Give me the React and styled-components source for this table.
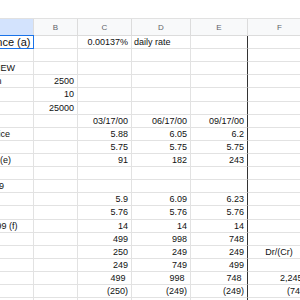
import React from 'react';
import styled, { createGlobalStyle } from 'styled-components';

const Global = createGlobalStyle`
  html, body { margin: 0; padding: 0; background: #fff; }
  body { font-family: 'Liberation Sans', Arial, sans-serif; }
`;

const COLS = '88px 44px 54px 59px 57px 64px';

const Viewport = styled.div`
  width: 300px;
  height: 300px;
  overflow: hidden;
  background: #fff;
`;

const TopBand = styled.div`
  height: 19px;
  box-sizing: border-box;
  border-bottom: 1px solid #e1e1e1;
`;

const Sheet = styled.div`
  margin-left: -54px;
  width: max-content;
`;

const HeaderRow = styled.div`
  display: grid;
  grid-template-columns: ${COLS};
  height: 17px;
`;

const HeaderCell = styled.div`
  box-sizing: border-box;
  border-right: 1px solid #dcdcdc;
  border-bottom: 1px solid #dcdcdc;
  background: ${(p) => (p.$selected ? '#d3e3fd' : '#f8f9fa')};
  color: #5f6368;
  font-size: 8px;
  display: flex;
  align-items: center;
  justify-content: center;
`;

const Row = styled.div`
  display: grid;
  grid-template-columns: ${COLS};
  height: 13.12px;
`;

const Cell = styled.div`
  position: relative;
  box-sizing: border-box;
  border-bottom: 1px solid #e2e2e2;
  border-right: ${(p) => (p.$thick ? '1px solid #333' : '1px solid #e2e2e2')};
  font-size: ${(p) => (p.$active ? '11px' : '9px')};
  color: #111;
  white-space: nowrap;
  display: flex;
  align-items: center;
  justify-content: ${(p) =>
    p.$align === 'right' ? 'flex-end' : p.$align === 'center' ? 'center' : 'flex-start'};
  padding: 0 ${(p) => (p.$pad != null ? `${p.$pad}px` : '3px')} 0 2px;
  overflow: ${(p) => (p.$active ? 'visible' : 'hidden')};
`;

const ActiveFrame = styled.div`
  position: absolute;
  left: -1px;
  top: -1px;
  right: -1px;
  bottom: -1px;
  border: 1px solid #1a73e8;
  pointer-events: none;
`;

const rows = [
  { a: 'Daily balance (a)', c: '0.00137%', d: 'daily rate', dAlign: 'left', active: true },
  {},
  { a: 'SALES REVIEW' },
  { a: 'Long position', b: '2500' },
  { a: 'Price', b: '10' },
  { a: 'Cost', b: '25000' },
  { c: '03/17/00', d: '06/17/00', e: '09/17/00' },
  { a: 'Last trade price', c: '5.88', d: '6.05', e: '6.2' },
  { a: 'Strike', c: '5.75', d: '5.75', e: '5.75' },
  { a: 'Days owned (e)', c: '91', d: '182', e: '243' },
  {},
  { a: 'Thru 12/31/99' },
  { c: '5.9', d: '6.09', e: '6.23' },
  { c: '5.76', d: '5.76', e: '5.76' },
  { a: 'From 12/31/99 (f)', c: '14', d: '14', e: '14' },
  { c: '499', d: '998', e: '748' },
  { c: '250', d: '249', e: '249', f: 'Dr/(Cr)', fAlign: 'center' },
  { c: '249', d: '749', e: '499' },
  { c: '499', d: '998', e: '748', f: '2,245', pad: 5.5, fPad: 8.5 },
  { c: '(250)', d: '(249)', e: '(249)', f: '(748)' },
  {},
];

export default function App() {
  return (
    <>
      <Global />
      <Viewport>
        <TopBand />
        <Sheet>
          <HeaderRow>
            <HeaderCell $selected>A</HeaderCell>
            <HeaderCell>B</HeaderCell>
            <HeaderCell>C</HeaderCell>
            <HeaderCell>D</HeaderCell>
            <HeaderCell>E</HeaderCell>
            <HeaderCell>F</HeaderCell>
          </HeaderRow>
          {rows.map((r, i) => (
            <Row key={i}>
              <Cell $active={r.active}>
                {r.a}
                {r.active && <ActiveFrame />}
              </Cell>
              <Cell $align="right">{r.b}</Cell>
              <Cell $align="right" $pad={r.pad}>{r.c}</Cell>
              <Cell $align={r.dAlign || 'right'} $pad={r.pad}>{r.d}</Cell>
              <Cell $align="right" $pad={r.pad} $thick>{r.e}</Cell>
              <Cell $align={r.fAlign || 'right'} $pad={r.fPad}>{r.f}</Cell>
            </Row>
          ))}
        </Sheet>
      </Viewport>
    </>
  );
}
